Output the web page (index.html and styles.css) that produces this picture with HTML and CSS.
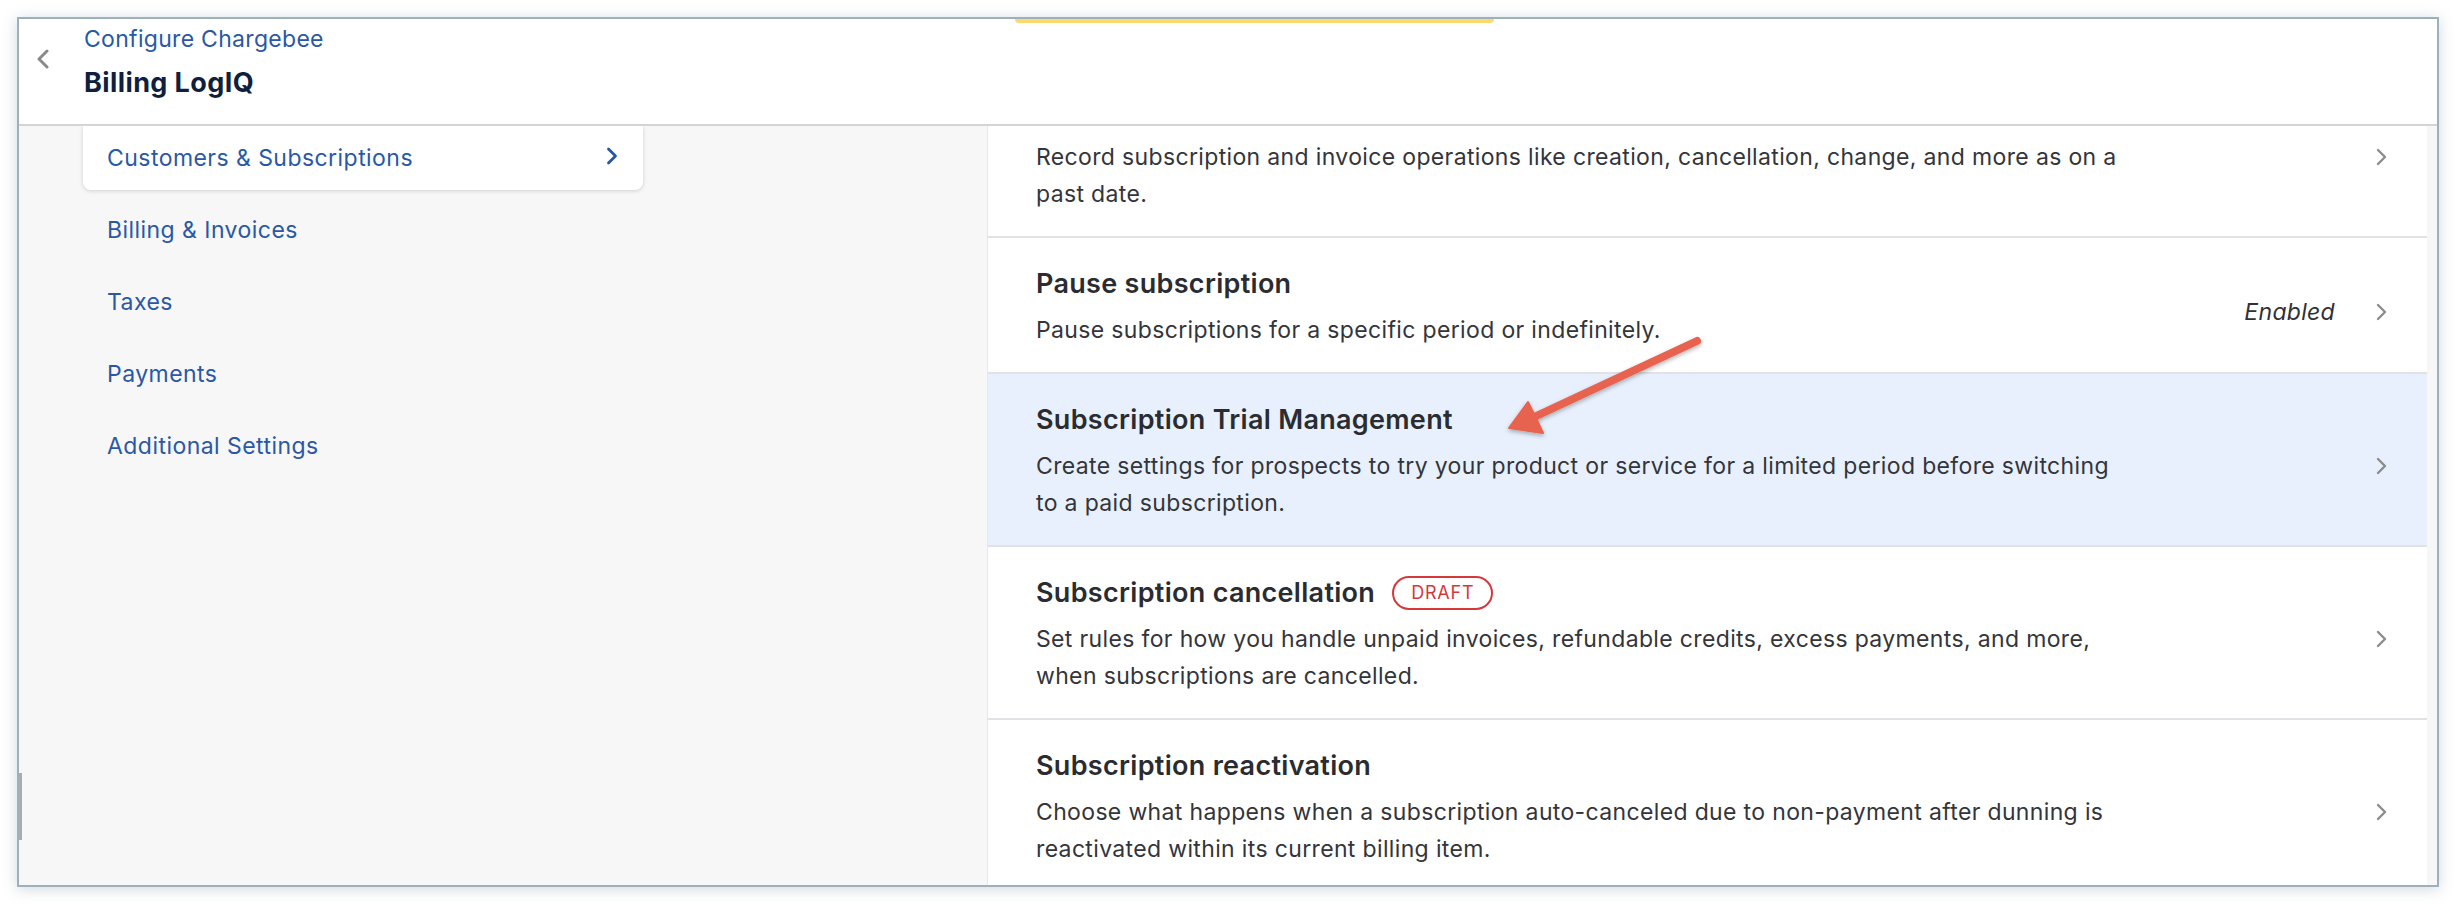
FILE: index.html
```html
<!DOCTYPE html>
<html lang="en">
<head>
<meta charset="utf-8">
<title>Billing LogIQ - Configure Chargebee</title>
<link rel="stylesheet" href="styles.css">
</head>
<body>
<div class="frame">
  <div class="notch"></div>
  <header class="topbar">
    <span class="back">
      <svg width="14" height="20" viewBox="0 0 14 20"><path d="M11 2 L3 10 L11 18" fill="none" stroke="#8a8a8a" stroke-width="3" stroke-linecap="round" stroke-linejoin="round"/></svg>
    </span>
    <div class="titles">
      <div class="crumb">Configure Chargebee</div>
      <div class="name">Billing LogIQ</div>
    </div>
  </header>
  <div class="body">
    <aside class="side">
      <nav class="nav">
        <div class="nav-item active">
          <span>Customers &amp; Subscriptions</span>
          <svg width="12" height="18" viewBox="0 0 12 18"><path d="M2.5 2 L9.5 9 L2.5 16" fill="none" stroke="#2857a4" stroke-width="2.8" stroke-linecap="round" stroke-linejoin="round"/></svg>
        </div>
        <div class="nav-item"><span>Billing &amp; Invoices</span></div>
        <div class="nav-item"><span>Taxes</span></div>
        <div class="nav-item"><span>Payments</span></div>
        <div class="nav-item"><span>Additional Settings</span></div>
      </nav>
    </aside>
    <main class="main">
      <div class="list">
        <div class="row">
          <div class="row-text">
            <div class="row-title">Backdating subscription</div>
            <div class="row-desc">Record subscription and invoice operations like creation, cancellation, change, and more as on a past date.</div>
          </div>
          <div class="row-end">
            <svg class="chev" width="14" height="18" viewBox="0 0 14 18"><path d="M3 2 L10 9 L3 16" fill="none" stroke="#8c8c8c" stroke-width="2.4" stroke-linecap="round" stroke-linejoin="round"/></svg>
          </div>
        </div>
        <div class="row">
          <div class="row-text">
            <div class="row-title">Pause subscription</div>
            <div class="row-desc">Pause subscriptions for a specific period or indefinitely.</div>
          </div>
          <div class="row-end">
            <span class="status">Enabled</span>
            <svg class="chev" width="14" height="18" viewBox="0 0 14 18"><path d="M3 2 L10 9 L3 16" fill="none" stroke="#8c8c8c" stroke-width="2.4" stroke-linecap="round" stroke-linejoin="round"/></svg>
          </div>
        </div>
        <div class="row highlight">
          <div class="row-text">
            <div class="row-title">Subscription Trial Management</div>
            <div class="row-desc">Create settings for prospects to try your product or service for a limited period before switching to a paid subscription.</div>
          </div>
          <div class="row-end">
            <svg class="chev" width="14" height="18" viewBox="0 0 14 18"><path d="M3 2 L10 9 L3 16" fill="none" stroke="#8c8c8c" stroke-width="2.4" stroke-linecap="round" stroke-linejoin="round"/></svg>
          </div>
        </div>
        <div class="row">
          <div class="row-text">
            <div class="row-title">Subscription cancellation <span class="badge">DRAFT</span></div>
            <div class="row-desc">Set rules for how you handle unpaid invoices, refundable credits, excess payments, and more, when subscriptions are cancelled.</div>
          </div>
          <div class="row-end">
            <svg class="chev" width="14" height="18" viewBox="0 0 14 18"><path d="M3 2 L10 9 L3 16" fill="none" stroke="#8c8c8c" stroke-width="2.4" stroke-linecap="round" stroke-linejoin="round"/></svg>
          </div>
        </div>
        <div class="row">
          <div class="row-text">
            <div class="row-title">Subscription reactivation</div>
            <div class="row-desc">Choose what happens when a subscription auto-canceled due to non-payment after dunning is reactivated within its current billing item.</div>
          </div>
          <div class="row-end">
            <svg class="chev" width="14" height="18" viewBox="0 0 14 18"><path d="M3 2 L10 9 L3 16" fill="none" stroke="#8c8c8c" stroke-width="2.4" stroke-linecap="round" stroke-linejoin="round"/></svg>
          </div>
        </div>
      </div>
    </main>
    <div class="gutter"></div>
  </div>
  <div class="handle"></div>
</div>
<svg class="arrow" width="2456" height="904" viewBox="0 0 2456 904">
  <defs>
    <filter id="sh" x="-20%" y="-20%" width="140%" height="140%">
      <feDropShadow dx="0" dy="2" stdDeviation="2" flood-color="#000" flood-opacity="0.3"/>
    </filter>
  </defs>
  <g filter="url(#sh)">
    <line x1="1697" y1="341" x2="1532" y2="418" stroke="#e8634f" stroke-width="8" stroke-linecap="round"/>
    <polygon points="1509,428 1528,402 1536,418 1543,433" fill="#e8634f" stroke="#e8634f" stroke-width="2" stroke-linejoin="round"/>
  </g>
</svg>
</body>
</html>
```

FILE: styles.css
```css
* { box-sizing: border-box; }
html, body { margin: 0; padding: 0; background: #ffffff; }
body {
  font-family: Inter, "Noto Sans", "Liberation Sans", sans-serif;
  width: 2456px;
  height: 904px;
  overflow: hidden;
  position: relative;
}
.frame {
  position: relative;
  margin: 17px 0 0 17px;
  width: 2422px;
  height: 870px;
  border: 2px solid #9cb0bd;
  box-shadow: 0 2px 14px rgba(90, 120, 140, 0.28);
  background: #f7f7f7;
  display: flex;
  flex-direction: column;
  overflow: hidden;
}
.notch {
  position: absolute;
  top: 0;
  left: 996px;
  width: 479px;
  height: 4px;
  background: #fdd96b;
  border-radius: 0 0 4px 4px;
}
.topbar {
  height: 107px;
  flex: none;
  background: #ffffff;
  border-bottom: 2px solid #d4d4d4;
  display: flex;
  align-items: flex-start;
  padding-left: 17px;
}
.back {
  display: block;
  margin-top: 30px;
  width: 14px;
  height: 20px;
}
.back svg { display: block; }
.titles {
  margin-left: 34px;
  padding-top: 5px;
}
.crumb {
  font-size: 23px;
  line-height: 30px;
  letter-spacing: 0.3px;
  color: #2a58a6;
}
.name {
  margin-top: 12px;
  font-size: 27px;
  line-height: 34px;
  font-weight: 700;
  letter-spacing: 0.4px;
  color: #0f1f3d;
}
.body {
  flex: 1;
  display: flex;
  min-height: 0;
}
.side {
  width: 968px;
  flex: none;
  background: #f7f7f7;
  padding-left: 64px;
  overflow: hidden;
}
.nav {
  width: 560px;
  display: flex;
  flex-direction: column;
  gap: 8px;
}
.nav-item {
  height: 64px;
  display: flex;
  align-items: center;
  justify-content: space-between;
  padding: 0 25px 0 24px;
  font-size: 23px;
  letter-spacing: 0.45px;
  color: #2a58a6;
  border-radius: 8px;
}
.nav-item.active {
  background: #ffffff;
  border-radius: 0 0 8px 8px;
  box-shadow: 0 1px 4px rgba(0, 0, 0, 0.16);
}
.nav-item.active svg { margin-top: -4px; }
.main {
  width: 1440px;
  flex: none;
  background: #ffffff;
  border-left: 1px solid #e8e8e8;
  overflow: hidden;
}
.list {
  margin-top: -61px;
}
.row {
  display: flex;
  align-items: center;
  padding: 28px 38px 23px 48px;
  border-bottom: 2px solid #e1e1e6;
}
.row.highlight { background: #e7f0fc; }
.row-text {
  flex: 1;
  min-width: 0;
}
.row-title {
  font-size: 27px;
  line-height: 36px;
  font-weight: 600;
  letter-spacing: 0.3px;
  color: #2a2c31;
  display: flex;
  align-items: center;
}
.row-desc {
  margin-top: 10px;
  font-size: 23px;
  line-height: 37px;
  letter-spacing: 0.35px;
  color: #33353a;
  max-width: 1098px;
}
.row-end {
  display: flex;
  align-items: center;
  margin-top: 8px;
}
.status {
  font-size: 23px;
  font-style: italic;
  letter-spacing: 0.3px;
  color: #2f3136;
  margin-right: 40px;
}
.chev { display: block; }
.badge {
  display: inline-flex;
  align-items: center;
  justify-content: center;
  margin-left: 17px;
  height: 34px;
  padding: 0 17px;
  border: 2px solid #d5383b;
  border-radius: 17px;
  font-size: 18px;
  font-weight: 400;
  letter-spacing: 0.8px;
  color: #d5383b;
}
.gutter {
  flex: 1;
  background: #f7f7f7;
}
.handle {
  position: absolute;
  left: 0;
  top: 754px;
  width: 3px;
  height: 67px;
  background: #ababab;
}
.arrow {
  position: absolute;
  left: 0;
  top: 0;
  pointer-events: none;
}
```
